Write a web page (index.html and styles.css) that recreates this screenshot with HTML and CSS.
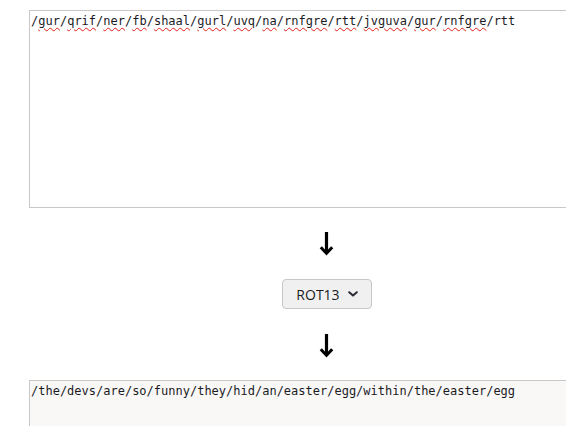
FILE: index.html
```html
<!DOCTYPE html>
<html>
<head>
<meta charset="utf-8">
<link rel="stylesheet" href="styles.css">
</head>
<body>
<main class="page">
  <div class="box box-input"><span class="sp">/<u>gur</u>/<u>qrif</u>/<u>ner</u>/<u>fb</u>/<u>shaal</u>/<u>gurl</u>/<u>uvq</u>/<u>na</u>/<u>rnfgre</u>/<u>rtt</u>/<u>jvguva</u>/<u>gur</u>/<u>rnfgre</u>/rtt</span></div>
  <div class="arrow arrow-first"><svg width="15" height="25" viewBox="0 0 15 25" aria-label="↓"><path d="M7.5 1 V22" stroke="#000" stroke-width="3.2" fill="none"/><path d="M1.8 16.2 L7.5 22.4 L13.2 16.2" stroke="#000" stroke-width="3" fill="none" stroke-linejoin="miter"/></svg></div>
  <button class="select" type="button"><span>ROT13</span><svg class="chev" width="10" height="6" viewBox="0 0 10 6"><path d="M1.2 1.2 L5 4.6 L8.8 1.2" fill="none" stroke="#2b2a33" stroke-width="2" stroke-linecap="round" stroke-linejoin="round"/></svg></button>
  <div class="arrow arrow-second"><svg width="15" height="25" viewBox="0 0 15 25" aria-label="↓"><path d="M7.5 1 V22" stroke="#000" stroke-width="3.2" fill="none"/><path d="M1.8 16.2 L7.5 22.4 L13.2 16.2" stroke="#000" stroke-width="3" fill="none" stroke-linejoin="miter"/></svg></div>
  <div class="box box-output">/the/devs/are/so/funny/they/hid/an/easter/egg/within/the/easter/egg</div>
</main>
</body>
</html>
```
FILE: styles.css
```css
html, body {
  margin: 0;
  padding: 0;
  background: #ffffff;
  overflow: hidden;
}
.page {
  width: 596px;
  margin-left: 29px;
  padding-top: 10px;
  display: flex;
  flex-direction: column;
  align-items: center;
}
.box {
  align-self: stretch;
  box-sizing: border-box;
  border: 1px solid #c9c8c6;
  padding: 3px 1px;
  font-family: "DejaVu Sans Mono", monospace;
  font-size: 12px;
  line-height: 14px;
  color: #1b1b1f;
  white-space: pre;
}
.box-input {
  height: 198px;
  background: #ffffff;
}
.box-input u {
  text-decoration: underline wavy #e0201c;
  text-decoration-thickness: 1px;
  text-underline-offset: 2px;
}
.box-output {
  height: 60px;
  background: #f9f8f7;
}
.arrow {
  height: 25px;
  margin-left: -1px;
}
.arrow-first {
  margin-top: 23px;
  margin-bottom: 23px;
}
.arrow-second {
  margin-top: 24px;
  margin-bottom: 22px;
}
.arrow svg {
  display: block;
}
.select {
  display: flex;
  align-items: center;
  gap: 8px;
  height: 30px;
  box-sizing: border-box;
  padding: 0 13px 0 13px;
  border: 1px solid #c8c7c5;
  border-radius: 4px;
  background: #f0f0f0;
  font-family: "Open Sans", sans-serif;
  font-size: 14px;
  color: #1b1b1f;
}
.chev {
  display: block;
}
```
